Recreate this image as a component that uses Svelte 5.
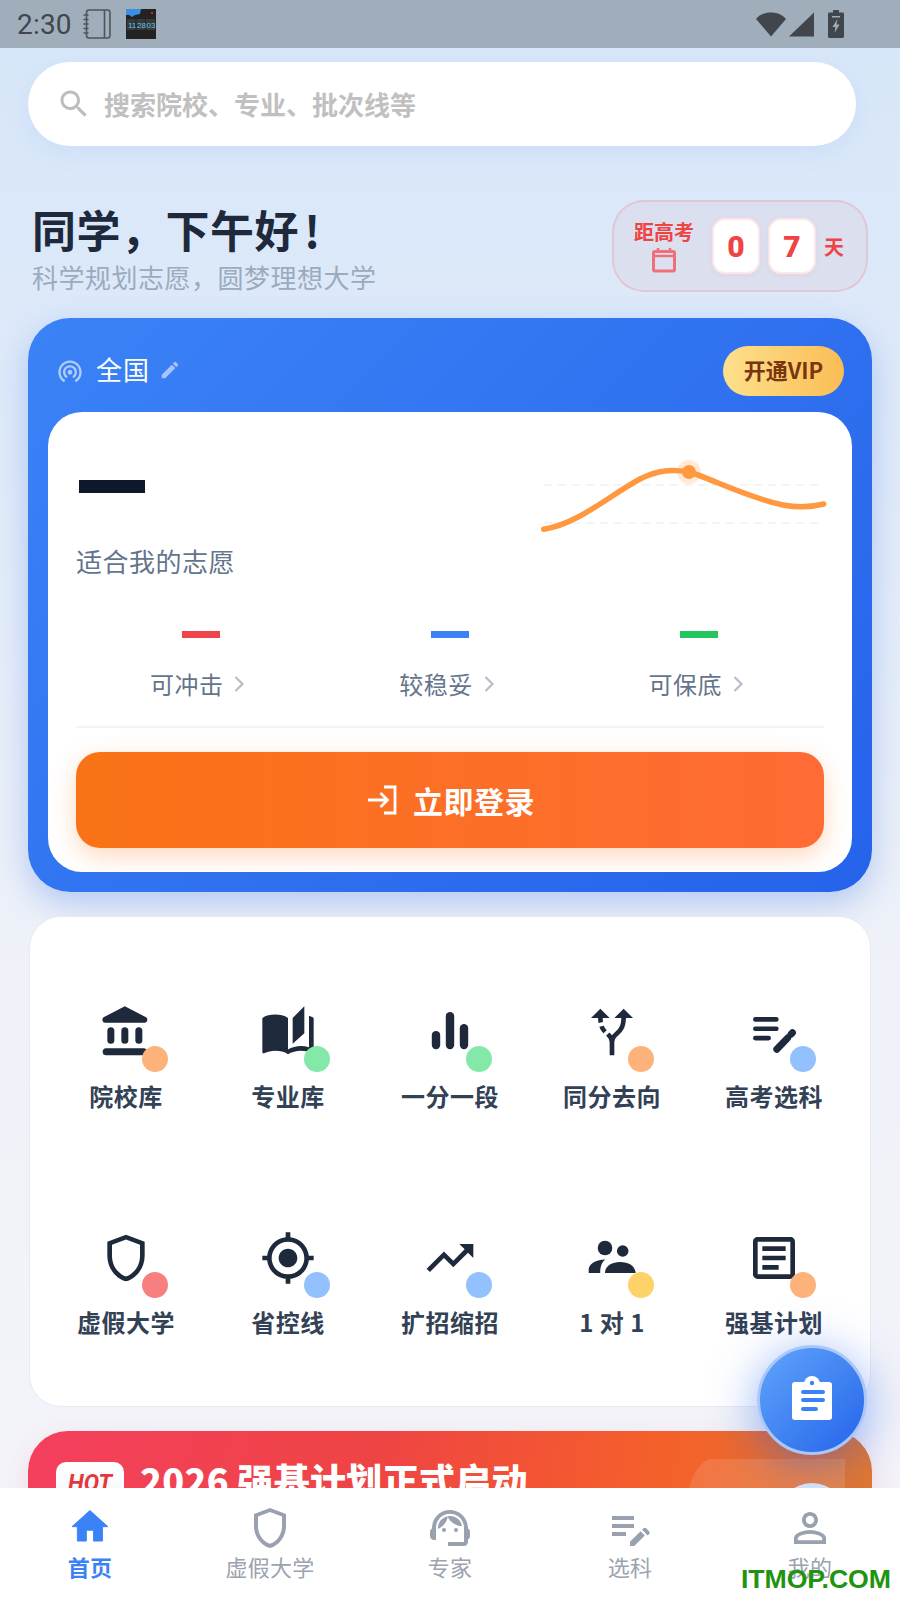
<script>
  const dark = '#1e293b';
  const icons = {
    bank: '<path d="M11.5 1 20.6 5.7c.9.5.6 2.3-.6 2.3H3c-1.2 0-1.5-1.8-.6-2.3z"/><rect x="4" y="10" width="3" height="7" rx="1.5"/><rect x="10" y="10" width="3" height="7" rx="1.5"/><rect x="16" y="10" width="3" height="7" rx="1.5"/><rect x="2" y="19" width="19" height="3" rx="1.5"/>',
    book: '<path d="M19 1l-5 5v11l5-4.5V1zM1 6v14.65c0 .25.25.5.5.5.1 0 .15-.05.25-.05C3.1 20.45 5.05 20 6.5 20c1.95 0 4.05.4 5.5 1.5V6c-1.45-1.1-3.55-1.5-5.5-1.5S2.45 4.9 1 6zm22 13.5V6c-.6-.45-1.25-.75-2-1v13.5c-1.1-.35-2.3-.5-3.5-.5-1.7 0-4.15.65-5.5 1.5v2c1.35-.85 3.8-1.5 5.5-1.5 1.65 0 3.35.3 4.75 1.05.1.05.15.05.25.05.25 0 .5-.25.5-.5v-1.1z"/>',
    bars: '<rect x="4.2" y="11.6" width="3.6" height="7.8" rx="1.8"/><rect x="10.2" y="3.4" width="3.6" height="16" rx="1.8"/><rect x="16.2" y="8.6" width="3.6" height="10.8" rx="1.8"/>',
    fork: '<path d="M9.78 11.16l-1.42 1.42c-.68-.69-1.34-1.53-1.79-2.78l1.94-.49c.32.89.77 1.5 1.27 1.85zM11 6L7 2 3 6h3.02c.02.81.08 1.54.19 2.17l1.94-.49C8.08 7.2 8.03 6.63 8.02 6H11zm10 0l-4-4-4 4h2.99c-.1 3.68-1.28 4.75-2.54 5.88-.5.44-1.01.92-1.45 1.55-.34-.49-.73-.88-1.13-1.24L9.46 13.6c.93.85 1.54 1.54 1.54 3.4v5h2v-5c0-2.02.71-2.66 1.79-3.63 1.38-1.24 3.08-2.78 3.2-7.37H21z"/>',
    note: '<g fill="none" stroke="#1e293b" stroke-linecap="round"><path stroke-width="2" d="M4 6.6h9M4 10.6h9M4 14.6h5.7"/><path stroke-width="3" d="M13.2 19.400l4.600-4.800"/><path stroke-width="3" d="M19.300 13l.6-.7"/></g>',
    shield: '<path d="M12 2 4 5v6.09c0 5.05 3.41 9.76 8 10.91 4.59-1.15 8-5.86 8-10.91V5l-8-3zm6 9.09c0 4-2.55 7.7-6 8.83-3.45-1.13-6-4.82-6-8.83V6.31l6-2.25 6 2.25v4.78z"/>',
    target: '<path d="M12 8c-2.21 0-4 1.79-4 4s1.79 4 4 4 4-1.79 4-4-1.79-4-4-4zm8.94 3c-.46-4.17-3.77-7.48-7.94-7.94V1h-2v2.06C6.83 3.52 3.52 6.83 3.06 11H1v2h2.06c.46 4.17 3.77 7.48 7.94 7.94V23h2v-2.06c4.17-.46 7.48-3.77 7.94-7.94H23v-2h-2.06zM12 19c-3.87 0-7-3.13-7-7s3.13-7 7-7 7 3.13 7 7-3.13 7-7 7z"/>',
    trend: '<path d="M16 6l2.29 2.29-4.88 4.88-4-4L2 16.59 3.41 18l6-6 4 4 6.3-6.29L22 12V6z"/>',
    people: '<g transform="scale(.4286)"><circle cx="21" cy="18" r="7.3"/><circle cx="38.7" cy="21" r="5.8"/><path d="M4.7 43v-3.500c0-5 6-9.500 16.500-10-3 2.500-5 6-5 13.500zM21 43c0-7 7-11 15-11 9 0 15 4 15.700 11z"/></g>',
    article: '<path d="M19 5v14H5V5h14m0-2H5c-1.100 0-2 .9-2 2v14c0 1.100.9 2 2 2h14c1.100 0 2-.9 2-2V5c0-1.100-.9-2-2-2zM14 17H7v-2h7v2zm3-4H7v-2h10v2zm0-4H7V7h10v2z"/>'
  };

  const features = [
    { label: '院校库', icon: 'bank', dot: '#feb27b' },
    { label: '专业库', icon: 'book', dot: '#84e9a8' },
    { label: '一分一段', icon: 'bars', dot: '#84e9a8' },
    { label: '同分去向', icon: 'fork', dot: '#feb27b' },
    { label: '高考选科', icon: 'note', dot: '#93c1fd' },
    { label: '虚假大学', icon: 'shield', dot: '#f87f7f' },
    { label: '省控线', icon: 'target', dot: '#93c1fd' },
    { label: '扩招缩招', icon: 'trend', dot: '#93c1fd' },
    { label: '1 对 1', icon: 'people', dot: '#fdd268' },
    { label: '强基计划', icon: 'article', dot: '#feb27b' }
  ];

  const stats = [
    { label: '可冲击', color: '#ef444a' },
    { label: '较稳妥', color: '#3b82f6' },
    { label: '可保底', color: '#22c55e' }
  ];

  const tabs = [
    { label: '首页', active: true, box: '-1.3 -0.6 26.67 26.67', d: '<path d="M10 20v-6h4v6h5v-8h3L12 3 2 12h3v8z" stroke="#3b82f6" stroke-width=".5" stroke-linejoin="round"/>' },
    { label: '虚假大学', box: '0 0 24 24', d: icons.shield },
    { label: '专家', box: '0 0 24 24', d: '<path d="M21 12.220C21 6.730 16.740 3 12 3c-4.690 0-9 3.650-9 9.280-.6.340-1 .980-1 1.720v2c0 1.100.9 2 2 2h1v-6.100c0-3.870 3.130-7 7-7s7 3.130 7 7V19h-8v2h8c1.100 0 2-.9 2-2v-1.220c.590-.310 1-.920 1-1.620v-2.300c0-.7-.410-1.310-1-1.640z"/><circle cx="9" cy="13" r="1"/><circle cx="15" cy="13" r="1"/><path d="M18 11.030C17.520 8.180 15.040 6 12.050 6c-3.030 0-6.290 2.510-6.030 6.450 2.470-1.010 4.330-3.210 4.860-5.890 1.310 2.630 4 4.440 7.120 4.470z"/>' },
    { label: '选科', box: '0 0 24 24', d: '<path d="M3 10h11v2H3v-2zm0-2h11V6H3v2zm0 8h7v-2H3v2z"/><g transform="translate(3 0)"><path d="M15.010 12.870l.71-.71c.39-.39 1.020-.39 1.410 0l1.410 1.410c.39.39.39 1.020 0 1.410l-.71.71-2.820-2.820zM14.300 13.580 9 18.880V21h2.120l5.300-5.300-2.120-2.120z"/></g>' },
    { label: '我的', box: '0 0 24 24', d: '<path d="M12 5.900c1.160 0 2.100.94 2.100 2.100s-.94 2.100-2.100 2.100S9.900 9.160 9.900 8s.94-2.100 2.100-2.100m0 9c2.970 0 6.100 1.460 6.100 2.100v1.100H5.900V17c0-.64 3.130-2.100 6.100-2.100M12 4C9.790 4 8 5.790 8 8s1.790 4 4 4 4-1.790 4-4-1.790-4-4-4zm0 9c-2.670 0-8 1.340-8 4v3h16v-3c0-2.660-5.330-4-8-4z"/>' }
  ];
</script>

<div class="app">
  <header class="status">
    <span class="time">2:30</span>
    <svg class="notebook" width="28" height="32" viewBox="0 0 28 32" fill="none" stroke="#4d545b" stroke-width="1.600">
      <rect x="3.500" y="2" width="23.500" height="28" rx="2.500"/>
      <path d="M21.500 2v28M.5 7h5M.5 11.500h5M.5 16h5M.5 20.500h5M.5 25h5"/>
    </svg>
    <svg class="thumb" width="30" height="30" viewBox="0 0 30 30">
      <rect width="30" height="30" fill="#232323"/>
      <path d="M0 0h15l-1 5-5 1-3 2-3-2H0z" fill="#3b8fe0"/>
      <rect x="25" y="3" width="2" height="2" fill="#e02020"/>
      <rect x="1" y="10" width="8.500" height="11" fill="#3a3a3a"/>
      <rect x="10.500" y="10" width="8.500" height="11" fill="#3a3a3a"/>
      <rect x="20" y="10" width="9" height="11" fill="#3a3a3a"/>
      <text x="2" y="18.500" class="thumb-text">11</text>
      <text x="11" y="18.500" class="thumb-text">28</text>
      <text x="20.500" y="18.500" class="thumb-text">03</text>
    </svg>
    <div class="status-right">
      <svg width="30" height="26" viewBox="0 0 30 26"><path d="M0 8C4 3.500 9 1.500 15 1.500S26 3.500 30 8L15 25.500z" fill="#41464d"/></svg>
      <svg width="26" height="26" viewBox="0 0 26 26"><path d="M25 1.500V25.500H0z" fill="#41464d"/></svg>
      <svg class="battery" width="16" height="28" viewBox="0 0 16 28">
        <path d="M5 0h6v2.500h3.500c.8 0 1.500.7 1.500 1.500v22.500c0 .8-.7 1.500-1.500 1.500h-13C.7 28 0 27.300 0 26.500V4c0-.8.7-1.500 1.500-1.500H5z" fill="#41464d"/>
        <path d="M9.500 9 4.500 17h3l-1 6 5-8.500h-3z" fill="#a0aebb"/>
        <rect x="4" y="6" width="8" height="1.500" fill="#a0aebb"/>
      </svg>
    </div>
  </header>

  <main class="page">
    <div class="search">
      <svg width="36" height="36" viewBox="0 0 24 24" fill="#bdbdbd"><path d="M15.500 14h-.79l-.28-.27C15.410 12.590 16 11.110 16 9.500 16 5.910 13.090 3 9.500 3S3 5.910 3 9.500 5.910 16 9.500 16c1.610 0 3.090-.59 4.230-1.570l.27.28v.79l5 4.990L20.490 19l-4.990-5zm-6 0C7.010 14 5 11.990 5 9.500S7.010 5 9.500 5 14 7.010 14 9.500 11.990 14 9.500 14z"/></svg>
      <span>搜索院校、专业、批次线等</span>
    </div>

    <section class="greeting">
      <div class="hello">
        <h1>同学，下午好<span>!</span></h1>
        <p>科学规划志愿，圆梦理想大学</p>
      </div>
      <div class="countdown">
        <div class="cd-label">
          <span>距高考</span>
          <svg width="26" height="26" viewBox="0 0 26 26" fill="none" stroke="#ef7078" stroke-width="3">
            <rect x="2.500" y="4.500" width="21" height="19.500" rx="1.500"/>
            <path d="M2.500 9h21" stroke-width="2.500"/>
            <path d="M7 1v4M19 1v4" stroke-width="2.500"/>
          </svg>
        </div>
        <b class="digit">0</b>
        <b class="digit">7</b>
        <span class="cd-unit">天</span>
      </div>
    </section>

    <section class="score-card">
      <div class="score-top">
        <svg width="28" height="28" viewBox="0 0 24 24" fill="#ffffff" fill-opacity=".6"><path d="M12 11c-1.100 0-2 .9-2 2s.9 2 2 2 2-.9 2-2-.9-2-2-2zm6 2c0-3.310-2.690-6-6-6s-6 2.690-6 6c0 2.220 1.210 4.150 3 5.190l1-1.740c-1.190-.7-2-1.970-2-3.450 0-2.210 1.790-4 4-4s4 1.790 4 4c0 1.480-.81 2.750-2 3.450l1 1.740c1.790-1.040 3-2.970 3-5.190zM12 3C6.480 3 2 7.480 2 13c0 3.700 2.010 6.920 4.990 8.650l1-1.730C5.610 18.530 4 15.960 4 13c0-4.420 3.580-8 8-8s8 3.580 8 8c0 2.960-1.610 5.530-4 6.920l1 1.730c2.990-1.730 5-4.950 5-8.650 0-5.520-4.480-10-10-10z"/></svg>
        <span class="region">全国</span>
        <svg class="pencil" width="22" height="22" viewBox="0 0 24 24" fill="#ffffff" fill-opacity=".55"><path d="M3 17.250V21h3.750L17.810 9.940l-3.750-3.750L3 17.250zM20.710 7.040c.39-.39.39-1.020 0-1.410l-2.340-2.340c-.39-.39-1.020-.39-1.410 0l-1.830 1.830 3.750 3.750 1.830-1.830z"/></svg>
        <span class="vip">开通VIP</span>
      </div>

      <div class="panel">
        <svg class="chart" width="310" height="95" viewBox="0 0 310 95" fill="none">
          <path d="M14 35h274M14 73h274" stroke="#f1f5f9" stroke-width="2" stroke-dasharray="8 6"/>
          <path d="M13.700 79.300C48 74 80 45 110 29 128 20 142 19 159 22 180 28 215 47 253 55 268 58 282 57 293.700 54" stroke="#ff983f" stroke-width="5.500" stroke-linecap="round"/>
          <circle cx="159" cy="22" r="12" fill="#ff983f" fill-opacity=".2"/>
          <circle cx="159" cy="22" r="7" fill="#ff983f"/>
        </svg>
        <div class="dash"></div>
        <div class="suits">适合我的志愿</div>

        <div class="stats">
          {#each stats as s}
            <div class="stat">
              <i style="background: {s.color}"></i>
              <div class="stat-label">
                <span>{s.label}</span>
                <svg width="24" height="24" viewBox="0 0 24 24" fill="none" stroke="#b8bec7" stroke-width="2.200"><path d="M8.500 5l7 7-7 7"/></svg>
              </div>
            </div>
          {/each}
        </div>

        <div class="divider"></div>

        <button class="login">
          <svg width="34" height="34" viewBox="0 0 34 34" fill="none" stroke="#fff" stroke-width="2.800">
            <path d="M3 17h19M15.500 10l7 7-7 7"/>
            <path d="M19 4h11v26H19"/>
          </svg>
          <span>立即登录</span>
        </button>
      </div>
    </section>

    <section class="features">
      {#each features as f}
        <div class="feature">
          <div class="feature-icon">
            <svg width="56" height="56" viewBox="0 0 24 24" fill={dark}>{@html icons[f.icon]}</svg>
            <i style="background: {f.dot}"></i>
          </div>
          <span>{f.label}</span>
        </div>
      {/each}
    </section>

    <section class="banner">
      <div class="deco"></div>
      <div class="deco-circle"></div>
      <span class="hot">HOT</span>
      <span class="banner-title">2026 强基计划正式启动</span>
    </section>
  </main>

  <button class="fab" aria-label="clipboard">
    <svg width="60" height="60" viewBox="0 0 60 60">
      <circle cx="30" cy="14" r="8" fill="#fff"/>
      <rect x="10" y="12" width="40" height="38" rx="3" fill="#fff"/>
      <circle cx="30" cy="13" r="2.200" fill="#3b82f6"/>
      <path d="M21 22h20M21 30h20M21 39h13" stroke="#3b82f6" stroke-width="4" stroke-linecap="round"/>
    </svg>
  </button>

  <nav class="tabbar">
    {#each tabs as t}
      <div class="tab" class:active={t.active}>
        <svg width="48" height="48" viewBox={t.box} fill={t.active ? '#3b82f6' : '#99a1af'}>{@html t.d}</svg>
        <span>{t.label}</span>
      </div>
    {/each}
  </nav>

  <div class="watermark">ITMOP.COM</div>
</div>

<style>
  :global(body) {
    margin: 0;
  }
  * {
    box-sizing: border-box;
  }
  .app {
    position: relative;
    width: 900px;
    height: 1600px;
    overflow: hidden;
    background: linear-gradient(180deg, #d6e6f8 0%, #dde9f9 20%, #eef1f8 60%, #f5f5fa 100%);
    font-family: "Noto Sans CJK SC", "Noto Sans", sans-serif;
  }

  .status {
    height: 48px;
    background: #a0aebb;
    display: flex;
    align-items: center;
    padding-left: 17px;
    color: #41464d;
  }
  .time {
    font-family: Roboto, sans-serif;
    font-size: 28px;
    letter-spacing: 0.2px;
    width: 66px;
  }
  .notebook {
    margin-right: 15px;
  }
  .thumb {
    margin-right: auto;
  }
  .thumb-text {
    font-family: "Liberation Sans", sans-serif;
    font-size: 8px;
    fill: #5ac8f5;
  }
  .status-right {
    display: flex;
    align-items: center;
    gap: 3px;
    padding-right: 56px;
  }
  .battery {
    margin-left: 10px;
  }

  .page {
    padding: 14px 28px 0;
  }
  .search {
    height: 84px;
    margin-right: 16px;
    border-radius: 42px;
    background: #fff;
    display: flex;
    align-items: center;
    gap: 12px;
    padding-left: 28px;
    box-shadow: 0 8px 24px rgba(59, 130, 246, 0.08);
    font-size: 26px;
    font-weight: 700;
    color: #c0c0c0;
  }
  .search span {
    padding-bottom: 2px;
  }

  .greeting {
    display: flex;
    justify-content: space-between;
    align-items: flex-start;
    margin-top: 54px;
    padding: 0 4px;
  }
  .hello {
    padding-top: 4px;
    height: 96px;
  }
  h1 {
    margin: 0;
    font-size: 44px;
    line-height: 50px;
    letter-spacing: 0.5px;
    font-weight: 700;
    color: #1e293b;
  }
  h1 span {
    margin-left: 5px;
  }
  .hello p {
    margin: 5px 0 0;
    font-size: 26px;
    line-height: 36px;
    letter-spacing: 0.5px;
    color: #9aabbf;
  }
  .countdown {
    width: 256px;
    height: 92px;
    border: 2px solid rgba(239, 68, 68, 0.15);
    border-radius: 32px;
    background: rgba(239, 68, 68, 0.05);
    display: flex;
    align-items: center;
    padding-left: 20px;
    color: #ef4444;
  }
  .cd-label {
    width: 60px;
    margin-right: 18px;
    display: flex;
    flex-direction: column;
    align-items: center;
    font-size: 20px;
    line-height: 26px;
    font-weight: 700;
  }
  .cd-label svg {
    margin-top: 2px;
  }
  .digit {
    width: 48px;
    height: 56px;
    margin-right: 8px;
    border: 2px solid #fde6e6;
    border-radius: 13px;
    background: #fff;
    display: flex;
    align-items: center;
    justify-content: center;
    font-family: Roboto, sans-serif;
    font-size: 30px;
    font-weight: 900;
    box-shadow: 0 2px 6px rgba(239, 68, 68, 0.06);
  }
  .cd-unit {
    font-size: 20px;
    font-weight: 700;
  }

  .score-card {
    margin-top: 22px;
    height: 574px;
    padding: 28px 20px 20px;
    border-radius: 42px;
    background: linear-gradient(135deg, #3b82f6, #2563eb);
    box-shadow: 0 12px 32px rgba(37, 99, 235, 0.28);
  }
  .score-top {
    height: 50px;
    margin-bottom: 16px;
    padding: 0 8px;
    display: flex;
    align-items: center;
    color: #fff;
  }
  .region {
    margin: 0 9px 0 12px;
    padding-bottom: 6px;
    font-size: 26px;
    letter-spacing: 1px;
  }
  .pencil {
    margin-bottom: 2px;
  }
  .vip {
    margin-left: auto;
    width: 121px;
    height: 50px;
    padding-bottom: 5px;
    border-radius: 25px;
    background: linear-gradient(90deg, #fde08c, #fbbd55);
    display: flex;
    align-items: center;
    justify-content: center;
    font-size: 22px;
    font-weight: 700;
    color: #78350f;
  }

  .panel {
    position: relative;
    height: 460px;
    padding: 68px 28px 24px;
    border-radius: 34px;
    background: #fff;
  }
  .chart {
    position: absolute;
    left: 482px;
    top: 38px;
  }
  .dash {
    width: 66px;
    height: 13px;
    margin-left: 3px;
    background: #0f172a;
  }
  .suits {
    margin-top: 50px;
    font-size: 26px;
    line-height: 36px;
    letter-spacing: 0.5px;
    color: #64748b;
  }
  .stats {
    display: grid;
    grid-template-columns: repeat(3, 1fr);
    margin-top: 52px;
  }
  .stat {
    display: flex;
    flex-direction: column;
    align-items: center;
  }
  .stat i {
    width: 38px;
    height: 7px;
  }
  .stat-label {
    margin-top: 29px;
    height: 36px;
    padding-bottom: 4px;
    display: flex;
    align-items: center;
    gap: 4px;
    font-size: 24px;
    letter-spacing: 0.5px;
    color: #64748b;
  }
  .stat-label svg {
    margin-top: 2px;
  }
  .divider {
    height: 2px;
    margin-top: 23px;
    background: #f1f5f9;
  }
  .login {
    width: 100%;
    height: 96px;
    margin-top: 24px;
    border: 0;
    border-radius: 24px;
    background: linear-gradient(90deg, #f97316, #ff6b35);
    box-shadow: 0 8px 24px rgba(249, 115, 22, 0.28);
    display: flex;
    align-items: center;
    justify-content: center;
    gap: 14px;
    color: #fff;
    font-family: inherit;
    font-size: 30px;
    font-weight: 700;
    letter-spacing: 0.5px;
  }

  .features {
    margin: 24px 1px 0;
    height: 491px;
    padding: 87px 15px 0;
    border: 1px solid #e6ebf3;
    border-radius: 32px;
    background: #fff;
    display: grid;
    grid-template-columns: repeat(5, 162px);
    grid-auto-rows: 226px;
  }
  .feature {
    display: flex;
    flex-direction: column;
    align-items: center;
    gap: 18px;
    font-size: 24px;
    line-height: 36px;
    letter-spacing: 0.5px;
    font-weight: 700;
    color: #334155;
  }
  .feature-icon {
    position: relative;
    width: 56px;
    height: 56px;
  }
  .feature-icon svg {
    display: block;
  }
  .feature-icon i {
    position: absolute;
    right: -14px;
    bottom: -12px;
    width: 26px;
    height: 26px;
    border-radius: 50%;
  }

  .banner {
    position: relative;
    margin-top: 24px;
    height: 220px;
    padding: 31px 28px;
    border-radius: 40px;
    background: linear-gradient(100deg, #f43f5e, #ef4444 40%, #f5602a 72%, #dd7a32);
    box-shadow: 0 10px 30px rgba(244, 63, 94, 0.15);
    display: flex;
    align-items: flex-start;
    gap: 16px;
    color: #fff;
    overflow: hidden;
  }
  .deco {
    position: absolute;
    left: 657px;
    top: 28px;
    width: 160px;
    height: 120px;
    border-top-left-radius: 28px 60px;
    background: rgba(255, 255, 255, 0.12);
  }
  .deco-circle {
    position: absolute;
    left: 749px;
    top: 52px;
    width: 70px;
    height: 70px;
    border-radius: 50%;
    background: #dbe8fb;
  }
  .hot {
    position: relative;
    width: 68px;
    height: 60px;
    padding-top: 7px;
    border-radius: 10px;
    background: linear-gradient(180deg, #fff, #eef2fc);
    color: #e5383b;
    text-align: center;
    font-family: Roboto, sans-serif;
    font-size: 23px;
    line-height: 30px;
    font-weight: 700;
    font-style: italic;
  }
  .banner-title {
    position: relative;
    margin-top: -8px;
    font-size: 36px;
    line-height: 50px;
    letter-spacing: 0.3px;
    font-weight: 900;
  }

  .fab {
    position: absolute;
    left: 757px;
    top: 1345px;
    width: 110px;
    height: 110px;
    border: 3px solid #a9c7f7;
    border-radius: 50%;
    padding: 0;
    background: linear-gradient(135deg, #60a5fa, #2563eb);
    box-shadow: 0 8px 48px rgba(37, 99, 235, 0.5);
    display: flex;
    align-items: center;
    justify-content: center;
  }

  .tabbar {
    position: absolute;
    left: 0;
    right: 0;
    bottom: 0;
    height: 112px;
    padding-top: 16px;
    background: #fff;
    display: grid;
    grid-template-columns: repeat(5, 1fr);
  }
  .tab {
    display: flex;
    flex-direction: column;
    align-items: center;
    font-size: 22px;
    line-height: 28px;
    letter-spacing: 0.3px;
    color: #9ca3af;
  }
  .tab svg {
    display: block;
  }
  .tab.active {
    color: #3b82f6;
    font-weight: 700;
  }

  .watermark {
    position: absolute;
    left: 741px;
    top: 1562px;
    font-family: "Liberation Sans", sans-serif;
    font-size: 26.7px;
    line-height: 34px;
    letter-spacing: -0.1px;
    font-weight: 700;
    color: #1f9410;
  }
</style>
